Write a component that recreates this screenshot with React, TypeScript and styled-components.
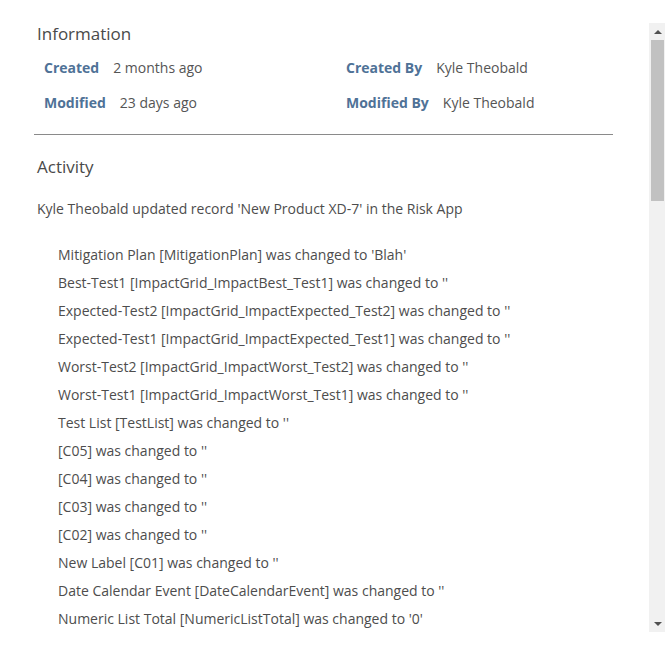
import React from "react";
import styled, { createGlobalStyle } from "styled-components";

const GlobalStyle = createGlobalStyle`
  html, body { margin: 0; padding: 0; background: #ffffff; }
  body { font-family: "Open Sans", "Liberation Sans", sans-serif; color: #555; }
`;

const Page = styled.div`
  padding-top: 23px;
`;

const Frame = styled.div`
  display: flex;
  height: 609px;
`;

const Content = styled.div`
  flex: 1;
  min-width: 0;
  overflow: hidden;
  padding: 0 36px 0 34px;
`;

const Scrollbar = styled.div`
  width: 16px;
  flex: none;
  display: flex;
  flex-direction: column;
  background: #f1f1f1;
`;

const ScrollButton = styled.div`
  height: 17px;
  flex: none;
  display: flex;
  align-items: center;
  justify-content: center;
  padding-left: 1px;
`;

const Track = styled.div`
  flex: 1;
  display: flex;
  flex-direction: column;
  padding: 0 1px 0 2px;
`;

const Thumb = styled.div`
  height: 161px;
  background: #c1c1c1;
`;

const Section = styled.section<{ $divider?: boolean }>`
  padding-bottom: ${(p) => (p.$divider ? "21px" : "0")};
  border-bottom: ${(p) => (p.$divider ? "1px solid #8a8a8a" : "none")};
`;

const Heading = styled.h2<{ $top: number }>`
  margin: ${(p) => p.$top}px 0 0 3px;
  font-size: 17px;
  font-weight: 400;
  line-height: 22px;
  color: #4a4a4a;
`;

const InfoGrid = styled.div`
  display: grid;
  grid-template-columns: 302px 1fr;
  row-gap: 15px;
  margin: 13px 0 0 10px;
`;

const InfoItem = styled.div`
  display: flex;
  align-items: baseline;
  gap: 14px;
  font-size: 14px;
  line-height: 20px;
`;

const Label = styled.span`
  font-weight: 700;
  color: #4f7297;
`;

const Value = styled.span`
  color: #555;
`;

const Summary = styled.p`
  margin: 21px 0 0 3px;
  font-size: 14px;
  line-height: 20px;
  color: #4d4d4d;
`;

const ChangeList = styled.ul`
  list-style: none;
  margin: 26px 0 0 0;
  padding: 0 0 0 24px;
`;

const ChangeItem = styled.li`
  font-size: 14px;
  line-height: 20px;
  color: #4d4d4d;
  margin-bottom: 8px;
`;

const changes = [
  "Mitigation Plan [MitigationPlan] was changed to 'Blah'",
  "Best-Test1 [ImpactGrid_ImpactBest_Test1] was changed to ''",
  "Expected-Test2 [ImpactGrid_ImpactExpected_Test2] was changed to ''",
  "Expected-Test1 [ImpactGrid_ImpactExpected_Test1] was changed to ''",
  "Worst-Test2 [ImpactGrid_ImpactWorst_Test2] was changed to ''",
  "Worst-Test1 [ImpactGrid_ImpactWorst_Test1] was changed to ''",
  "Test List [TestList] was changed to ''",
  "[C05] was changed to ''",
  "[C04] was changed to ''",
  "[C03] was changed to ''",
  "[C02] was changed to ''",
  "New Label [C01] was changed to ''",
  "Date Calendar Event [DateCalendarEvent] was changed to ''",
  "Numeric List Total [NumericListTotal] was changed to '0'",
];

const Arrow = ({ down }: { down?: boolean }) => (
  <svg width="8" height="4" viewBox="0 0 8 4" aria-hidden="true">
    <polygon points={down ? "0,0 8,0 4,4" : "0,4 8,4 4,0"} fill="#505050" />
  </svg>
);

export default function App() {
  return (
    <Page>
      <GlobalStyle />
      <Frame>
        <Content>
          <Section $divider>
            <Heading $top={0}>Information</Heading>
            <InfoGrid>
              <InfoItem>
                <Label>Created</Label>
                <Value>2 months ago</Value>
              </InfoItem>
              <InfoItem>
                <Label>Created By</Label>
                <Value>Kyle Theobald</Value>
              </InfoItem>
              <InfoItem>
                <Label>Modified</Label>
                <Value>23 days ago</Value>
              </InfoItem>
              <InfoItem>
                <Label>Modified By</Label>
                <Value>Kyle Theobald</Value>
              </InfoItem>
            </InfoGrid>
          </Section>
          <Section>
            <Heading $top={21}>Activity</Heading>
            <Summary>Kyle Theobald updated record 'New Product XD-7' in the Risk App</Summary>
            <ChangeList>
              {changes.map((c, j) => (
                <ChangeItem key={j}>{c}</ChangeItem>
              ))}
            </ChangeList>
          </Section>
        </Content>
        <Scrollbar>
          <ScrollButton>
            <Arrow />
          </ScrollButton>
          <Track>
            <Thumb />
          </Track>
          <ScrollButton>
            <Arrow down />
          </ScrollButton>
        </Scrollbar>
      </Frame>
    </Page>
  );
}
